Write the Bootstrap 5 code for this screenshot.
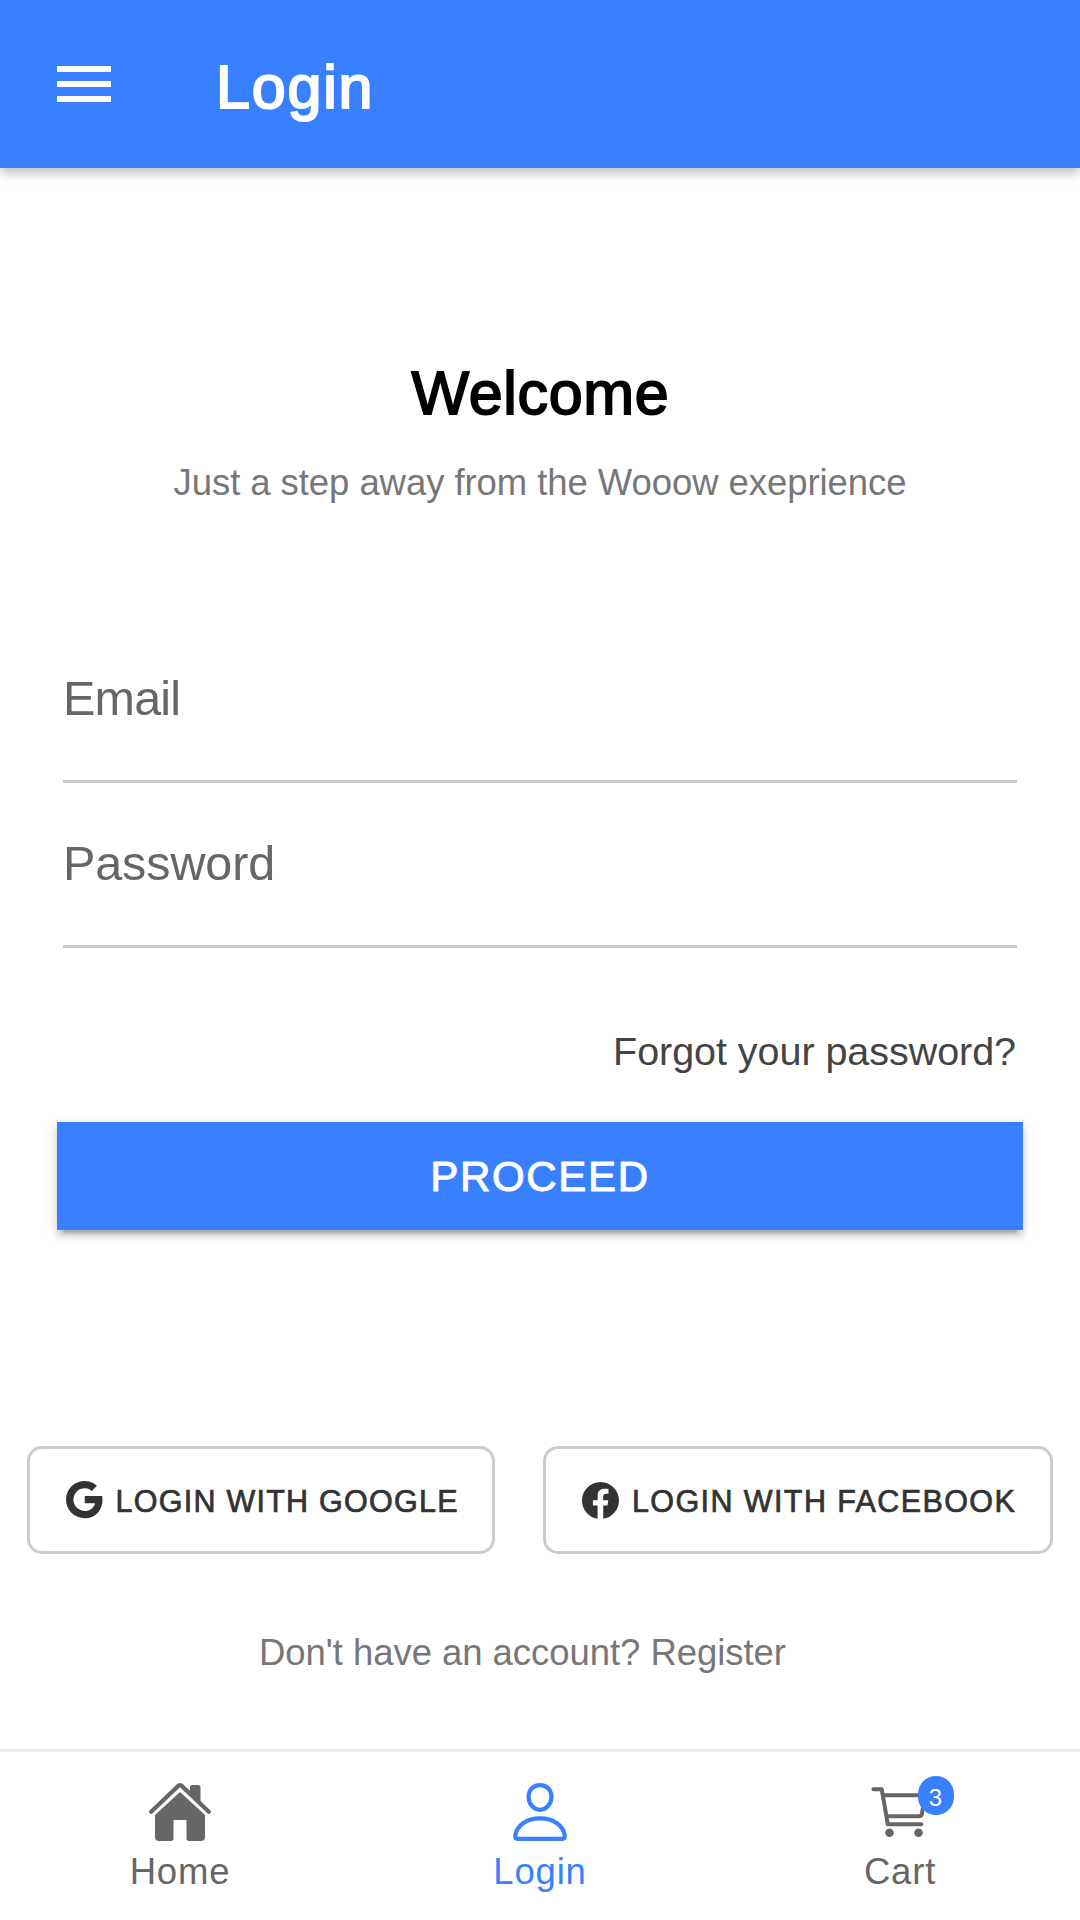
<!DOCTYPE html>
<html lang="en">
<head>
<meta charset="utf-8">
<meta name="viewport" content="width=device-width, initial-scale=1">
<title>Login</title>
<link href="https://cdn.jsdelivr.net/npm/bootstrap@5.3.0/dist/css/bootstrap.min.css" rel="stylesheet">
<style>
:root { --brand: #3880ff; --ink-muted: #666; }
body { font-family: "Liberation Sans", Arial, sans-serif; height: 1920px; background: #fff; overflow: hidden; }
.medium { -webkit-text-stroke: .024em currentColor; }
.app-bar { height: 168px; padding: 0 57px; background: var(--brand); box-shadow: 0 5px 11px rgba(0,0,0,.26); }
.app-title { font-size: 61px; line-height: 72px; letter-spacing: 1.8px; margin-left: 105px; padding-top: 6px; -webkit-text-stroke-width: .035em; }
.welcome { font-size: 61px; line-height: 72px; margin-top: 189px; letter-spacing: .7px; padding-left: 1px; color: #000; -webkit-text-stroke-width: .03em; }
.tagline { font-size: 36.5px; line-height: 44px; margin-top: 32px; letter-spacing: -.07px; color: #777; }
.login-form { margin-top: 113px; padding: 0 57px; }
.field { height: 165px; margin: 0 6px; border-bottom: 3px solid #ccc; padding-bottom: 1px; }
.field label { font-size: 48.5px; color: var(--ink-muted); white-space: nowrap; letter-spacing: -.1px; }
.field label[for="email"] { letter-spacing: -.8px; }
.forgot { font-size: 39.5px; line-height: 48px; margin-top: 79px; padding-right: 7px; letter-spacing: -.05px; color: #444; }
.btn-proceed { height: 108px; margin-top: 47px; padding: 1px 0 0; font-size: 42px; letter-spacing: 1.7px; color: #fff; background: var(--brand); box-shadow: 0 9px 3px -6px rgba(0,0,0,.2), 0 6px 6px 0 rgba(0,0,0,.14), 0 3px 15px 0 rgba(0,0,0,.12); }
.social { margin: 216px 27px 0; }
.btn-social { height: 108px; border: 3px solid #ccc; border-radius: 15px; color: #333; font-size: 30.5px; letter-spacing: 1.25px; padding: 0 0 0 36px; white-space: nowrap; }
.btn-social span { padding-top: 3px; }
.btn-social svg { margin-right: 13px; }
.btn-google { width: 468px; }
.btn-facebook { width: 510px; letter-spacing: 1.4px; }
.register { font-size: 36.5px; line-height: 44px; margin-top: 77px; letter-spacing: -.05px; color: #777; padding-right: 35px; }
.tab-bar { height: 171px; border-top: 3px solid #ededed; }
.tab { width: 360px; font-size: 36.5px; line-height: 44px; letter-spacing: .8px; color: var(--ink-muted); padding-top: 31px; }
.tab svg { margin-bottom: 9px; }
.tab.active { color: var(--brand); }
.count { left: 198px; top: 24px; width: 36px; height: 39px; border-radius: 18px; background: var(--brand); color: #fff; font-size: 24px; letter-spacing: 0; line-height: 44px; padding-right: 1px; }
</style>
</head>
<body class="d-flex flex-column">
<header class="app-bar d-flex align-items-center text-white flex-shrink-0">
  <svg width="54" height="36" viewBox="0 0 54 36" fill="currentColor"><path d="M0 0h54v6H0zM0 15h54v6H0zM0 30h54v6H0z"/></svg>
  <h1 class="app-title medium fw-normal mb-0">Login</h1>
</header>
<main class="flex-grow-1">
  <h2 class="welcome medium fw-normal text-center mb-0">Welcome</h2>
  <p class="tagline text-center mb-0">Just a step away from the Wooow exeprience</p>
  <form class="login-form">
    <div class="field d-flex align-items-center">
      <label for="email">Email</label>
      <input id="email" type="email" class="form-control border-0 bg-transparent shadow-none">
    </div>
    <div class="field d-flex align-items-center">
      <label for="pass">Password</label>
      <input id="pass" type="password" class="form-control border-0 bg-transparent shadow-none">
    </div>
    <p class="forgot text-end mb-0">Forgot your password?</p>
    <button type="button" class="btn btn-proceed medium w-100 rounded-0 border-0">PROCEED</button>
  </form>
  <div class="social d-flex justify-content-between">
    <button type="button" class="btn btn-social btn-google medium d-flex align-items-center">
      <svg width="36.5" height="37.2" viewBox="52 48 408 416" fill="currentColor"><path d="M457.6 224l-2.1-8.9H262V297h115.6c-12 57-67.7 87-113.2 87-33.1 0-68-13.9-91.1-36.3-23.7-23-38.8-56.9-38.8-91.8 0-34.5 15.5-69 38.1-91.7 22.5-22.6 56.6-35.4 90.5-35.4 38.8 0 66.6 20.6 77 30l58.2-57.9c-17.1-15-64-52.8-137.1-52.8-56.4 0-110.5 21.6-150 61C72.2 148.1 52 204 52 256s19.1 105.4 56.9 144.5c40.4 41.7 97.6 63.5 156.5 63.5 53.6 0 104.4-21 140.6-59.1 35.6-37.5 54-89.4 54-143.8 0-22.9-2.3-36.5-2.4-37.1z"/></svg>
      <span>LOGIN WITH GOOGLE</span>
    </button>
    <button type="button" class="btn btn-social btn-facebook medium d-flex align-items-center">
      <svg width="37" height="37" viewBox="0 0 37 37" fill="currentColor"><path d="M18.500 0C8.300 0 0 8.300 0 18.500c0 9.200 6.700 16.900 15.600 18.300V23.400h-4.700v-5.200h4.700v-4.200c0-4.700 2.700-7.200 6.900-7.200 2 0 4 .35 4 .35v4.500h-2.300c-2.300 0-3 1.400-3 2.900v3.650h5.100l-.8 5.200h-4.300v13.400C30.300 35.400 37 27.700 37 18.500 37 8.300 28.700 0 18.500 0z"/></svg>
      <span>LOGIN WITH FACEBOOK</span>
    </button>
  </div>
  <p class="register text-center mb-0">Don't have an account? Register</p>
</main>
<nav class="tab-bar d-flex flex-shrink-0">
  <div class="tab d-flex flex-column align-items-center">
    <svg width="62" height="58" viewBox="0 0 62 58" fill="currentColor"><path d="M31 9L6 32V54q0 4 4 4h12q2.500 0 2.500-2.500V37h13v18.500q0 2.500 2.500 2.500h12q4 0 4-4V32z"/><path d="M41 9V4.500q0-2.500 2.500-2.500h5.500q2.500 0 2.500 2.500V19.500z"/><path d="M2.200 28.800L29.300 2.900q1.700-1.400 3.400 0L59.800 28.800" fill="none" stroke="currentColor" stroke-width="4.200" stroke-linecap="round"/></svg>
    <span>Home</span>
  </div>
  <div class="tab active d-flex flex-column align-items-center">
    <svg width="54" height="58" viewBox="0 0 54 58" fill="none" stroke="currentColor" stroke-width="4.200"><path d="M27 2.100C19.500 2.100 15.600 7.500 15.600 13.500c0 7.500 4.900 13.300 11.400 13.300s11.400-5.800 11.400-13.300C38.400 7.500 34.500 2.100 27 2.100z"/><path d="M4.500 55.900h45q2.400 0 2.300-2.800C50.500 42.500 40.500 35.400 27 35.400S3.500 42.500 2.200 53.100q-.1 2.800 2.300 2.800z"/></svg>
    <span>Login</span>
  </div>
  <div class="tab position-relative d-flex flex-column align-items-center">
    <svg width="54" height="58" viewBox="0 0 54 58" fill="none" stroke="currentColor" stroke-width="4" stroke-linecap="round" stroke-linejoin="round" overflow="visible"><path d="M.4 6.300h8.400L14.800 41.300h33.500"/><path d="M11 12.300h41l-3 18q-.5 2.900-3 2.900H14.500"/><circle cx="16.500" cy="49.700" r="4.300" fill="currentColor" stroke="none"/><circle cx="45.500" cy="49.700" r="4.300" fill="currentColor" stroke="none"/></svg>
    <span>Cart</span>
    <span class="count position-absolute text-center">3</span>
  </div>
</nav>
<script src="https://cdn.jsdelivr.net/npm/bootstrap@5.3.0/dist/js/bootstrap.bundle.min.js"></script>
</body>
</html>
